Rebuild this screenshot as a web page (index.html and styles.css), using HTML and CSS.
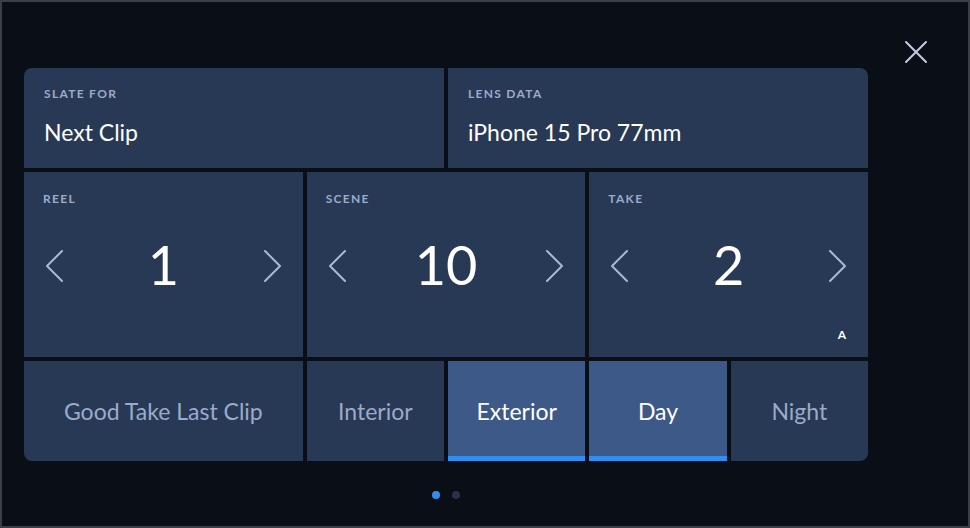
FILE: index.html
```html
<!DOCTYPE html>
<html>
<head>
<meta charset="utf-8">
<link rel="stylesheet" href="styles.css">
</head>
<body>
<div class="frame">
  <button class="close" aria-label="Close">
    <svg width="24" height="24" viewBox="0 0 24 24"><path d="M2 2 L22 22 M22 2 L2 22" stroke="#c3cbe0" stroke-width="2" fill="none" stroke-linecap="round"/></svg>
  </button>
  <div class="grid">
    <div class="card span3 info">
      <div class="label">SLATE FOR</div>
      <div class="value">Next Clip</div>
    </div>
    <div class="card span3 info">
      <div class="label">LENS DATA</div>
      <div class="value">iPhone 15 Pro 77mm</div>
    </div>

    <div class="card span2 counter">
      <div class="label">REEL</div>
      <div class="stepper">
        <svg class="chev" viewBox="0 0 20 34"><path d="M18 2 L3 17 L18 32" /></svg>
        <span class="num">1</span>
        <svg class="chev" viewBox="0 0 20 34"><path d="M2 2 L17 17 L2 32" /></svg>
      </div>
    </div>
    <div class="card span2 counter">
      <div class="label">SCENE</div>
      <div class="stepper">
        <svg class="chev" viewBox="0 0 20 34"><path d="M18 2 L3 17 L18 32" /></svg>
        <span class="num">10</span>
        <svg class="chev" viewBox="0 0 20 34"><path d="M2 2 L17 17 L2 32" /></svg>
      </div>
    </div>
    <div class="card span2 counter">
      <div class="label">TAKE</div>
      <div class="stepper">
        <svg class="chev" viewBox="0 0 20 34"><path d="M18 2 L3 17 L18 32" /></svg>
        <span class="num">2</span>
        <svg class="chev" viewBox="0 0 20 34"><path d="M2 2 L17 17 L2 32" /></svg>
      </div>
      <span class="badge">A</span>
    </div>

    <div class="card span2 btn">Good Take Last Clip</div>
    <div class="card btn">Interior</div>
    <div class="card btn active">Exterior</div>
    <div class="card btn active">Day</div>
    <div class="card btn">Night</div>
  </div>
  <div class="dots">
    <span class="dot on"></span>
    <span class="dot"></span>
  </div>
</div>
</body>
</html>
```

FILE: styles.css
```css
* { box-sizing: border-box; }
html, body { margin: 0; padding: 0; background: #0a0e16; }
body { font-family: Lato, "Open Sans", sans-serif; }

.frame {
  position: relative;
  width: 970px;
  height: 528px;
  border: 2px solid #3a3e45;
  background: #0a0e17;
  padding: 66px 0 0 22px;
}

.close {
  position: absolute;
  top: 38px;
  right: 40px;
  width: 24px;
  height: 24px;
  padding: 0;
  border: 0;
  background: none;
}
.close svg { display: block; }

.grid {
  width: 844px;
  display: grid;
  grid-template-columns: repeat(6, 1fr);
  grid-template-rows: 100px 185px 100px;
  gap: 4px;
  border-radius: 8px;
  overflow: hidden;
}

.card {
  position: relative;
  background: #283956;
  color: #ffffff;
}
.span2 { grid-column: span 2; }
.span3 { grid-column: span 3; }

.label {
  font-size: 12px;
  font-weight: 700;
  letter-spacing: 1.3px;
  color: #9cabc8;
  line-height: 14px;
}

.info { padding: 19px 20px 0 20px; }
.info .value {
  margin-top: 17px;
  font-size: 23px;
  line-height: 28px;
  color: #ffffff;
}

.counter { padding: 20px 20px 0 20px; }
.counter .label { position: absolute; top: 20px; left: 19px; }
.stepper {
  height: 185px;
  margin-top: -20px;
  display: flex;
  align-items: center;
  justify-content: space-between;
}
.chev {
  width: 20px;
  height: 34px;
  fill: none;
  stroke: #a9b8d6;
  stroke-width: 2;
  stroke-linecap: round;
  stroke-linejoin: round;
  margin-top: 2px;
}
.num {
  font-size: 54px;
  font-weight: 400;
  line-height: 1;
  color: #ffffff;
}
.badge {
  position: absolute;
  right: 22px;
  bottom: 15px;
  font-size: 12px;
  font-weight: 700;
  color: #ffffff;
}

.btn {
  display: flex;
  align-items: center;
  justify-content: center;
  font-size: 23px;
  color: #9babc8;
}
.btn.active {
  background: #3c5988;
  color: #ffffff;
  box-shadow: inset 0 -5px 0 #2f8ff0;
}

.dots {
  width: 844px;
  display: flex;
  justify-content: center;
  gap: 12px;
  margin-top: 30px;
}
.dot {
  width: 8px;
  height: 8px;
  border-radius: 50%;
  background: #28314a;
}
.dot.on { background: #2f8ff0; }
```
